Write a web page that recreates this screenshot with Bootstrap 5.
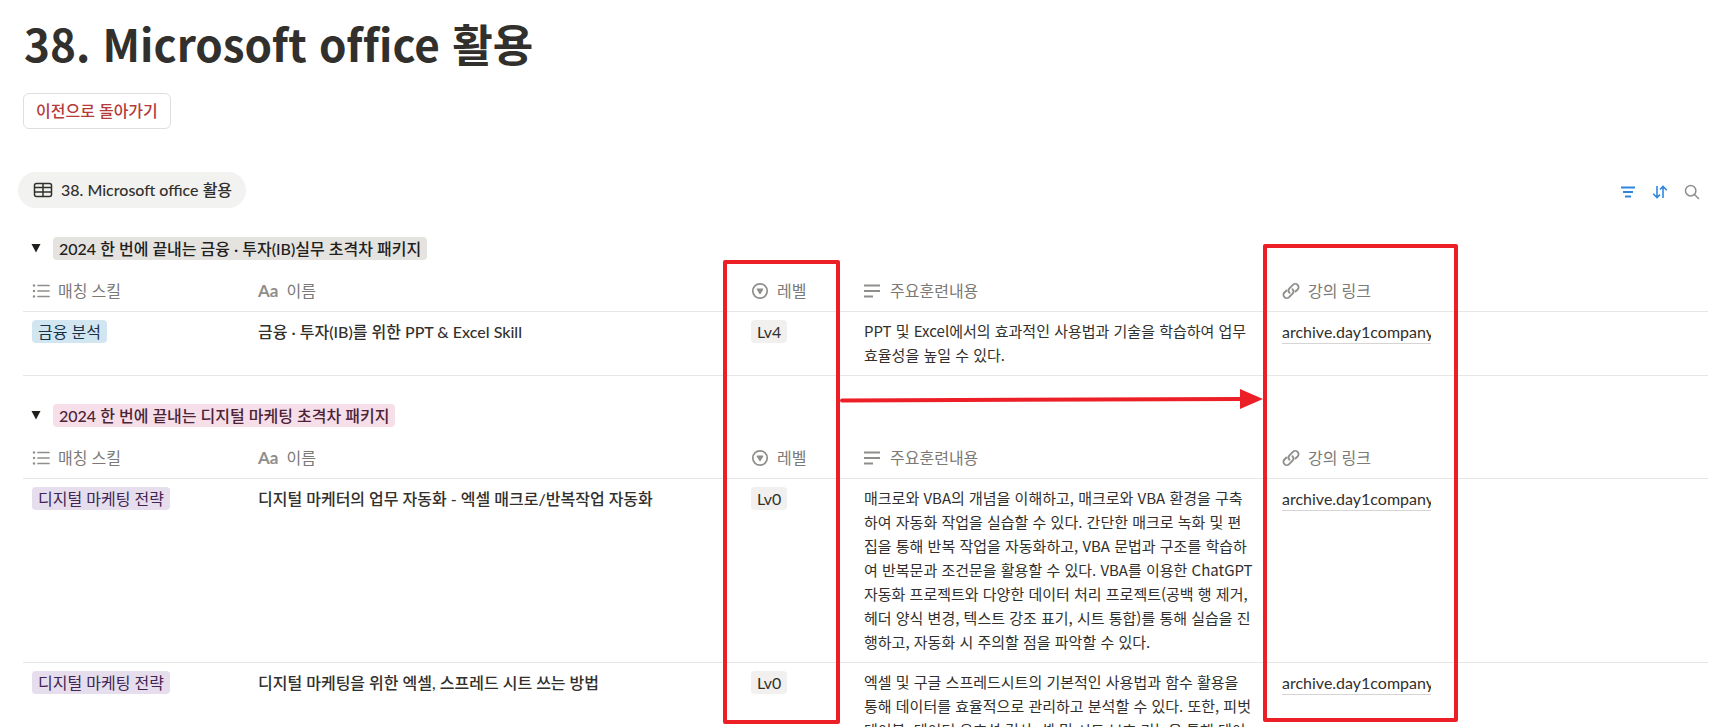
<!DOCTYPE html>
<html lang="ko">
<head>
<meta charset="utf-8">
<meta name="viewport" content="width=device-width, initial-scale=1">
<title>38. Microsoft office 활용</title>
<link href="https://cdn.jsdelivr.net/npm/bootstrap@5.3.0/dist/css/bootstrap.min.css" rel="stylesheet">
<style>
  body { font-family: Lato, "Noto Sans CJK KR", sans-serif; font-size: 16px; line-height: 24px; color: #32302c; background: #fff; font-variant-ligatures: none; }
  .page-title { font-family: "Noto Sans CJK KR", sans-serif; font-size: 44px; line-height: 52px; font-weight: 700; padding-top: 17px; }
  .back-btn { height: 36px; padding: 0 12px; border: 1px solid #dededd; border-radius: 6px; color: #b63a3a; font-weight: 500; line-height: 24px; background: #fff; }
  .view-tab { height: 36px; padding: 0 14px 0 15px; border: 0; border-radius: 18px; background: #f2f2f1; color: #32302c; font-weight: 500; }
  .toolbar { margin: 43px 7px 0 18px; }
  .tool-btn { width: 32px; height: 32px; border: 0; background: none; padding: 0; color: #2f87dd; }
  .tool-btn.find { color: #8f8e8b; }
  .page-block { margin: 0 7px 0 23px; }
  .board { margin-top: 18px; }
  .group-head { height: 44px; padding-left: 6px; }
  .next-group { margin-top: 17px; }
  .toggle-btn { width: 24px; height: 24px; border: 0; background: none; padding: 0; }
  .tag { display: inline-block; border-radius: 4px; padding: 0 6px; height: 23px; line-height: 23px; vertical-align: top; white-space: nowrap; }
  .tag-gray { background: #e4e3e0; color: #22201c; }
  .tag-pink { background: #f6dfe8; color: #4c2337; }
  .tag-blue { background: #d2e6f1; color: #183347; }
  .tag-purple { background: #e6deed; color: #412454; }
  .tag-lv { background: #f1f0ee; color: #32302c; }
  .grid-table { width: 100%; table-layout: fixed; border-collapse: separate; border-spacing: 0; }
  .grid-table th { height: 42px; padding: 0 9px; font-weight: 400; color: #7b7975; border-bottom: 1px solid #e6e6e4; vertical-align: middle; }
  .grid-table td { padding: 8px 9px 7px; border-bottom: 1px solid #e6e6e4; vertical-align: top; line-height: 24px; }
  .grid-table th svg { width: 18px; height: 18px; flex: none; color: #8f8e8b; }
  .grid-table td.desc-cell { padding: 7px 19px 8px 9px; font-family: "Noto Sans CJK KR", sans-serif; font-size: 15px; }
  .c-skill { width: 226px; } .c-name { width: 493px; } .c-level { width: 113px; } .c-desc { width: 418px; } .c-link { width: 167px; }
  .name-cell { font-weight: 500; }
  .aa { font-size: 17px; font-weight: 700; color: #8f8e8b; }
  .url { display: block; overflow: hidden; white-space: nowrap; height: 24px; }
  .url a { display: inline-block; line-height: 22px; color: #32302c; text-decoration: none; border-bottom: 1px solid #d6d5d3; }
  .note-box { position: absolute; border: 4px solid #ec1f27; border-radius: 2px; pointer-events: none; }
  .note-level { left: 700px; top: 34px; width: 117px; height: 464px; }
  .note-link { left: 1240px; top: 18px; width: 195px; height: 478px; }
  .note-arrow { position: absolute; left: 817px; top: 162px; width: 424px; height: 22px; pointer-events: none; }
</style>
</head>
<body>
<svg class="d-none" aria-hidden="true">
  <symbol id="i-list" viewBox="0 0 18 18"><path d="M6 3.500h11M6 9h11M6 14.500h11" stroke="currentColor" stroke-width="1.700" stroke-linecap="round"/><circle cx="2" cy="3.500" r="1.200" fill="currentColor"/><circle cx="2" cy="9" r="1.200" fill="currentColor"/><circle cx="2" cy="14.500" r="1.200" fill="currentColor"/></symbol>
  <symbol id="i-level" viewBox="0 0 18 18"><circle cx="9" cy="9" r="7.200" fill="none" stroke="currentColor" stroke-width="1.700"/><path d="M6.300 6.500h5.400a.6.6 0 0 1 .5.900L9.500 11.900a.6.6 0 0 1-1 0L5.800 7.400A.6.6 0 0 1 6.300 6.500z" fill="currentColor"/></symbol>
  <symbol id="i-text" viewBox="0 0 18 18"><path d="M0 3.500h16M0 9h16M0 14.500h9" stroke="currentColor" stroke-width="1.800"/></symbol>
  <symbol id="i-link" viewBox="0 0 18 18"><g fill="none" stroke="currentColor" stroke-width="1.800" stroke-linecap="round" stroke-linejoin="round"><path d="M7.600 10.900a3.300 3.300 0 0 1-.2-4.600L10.900 2.800a3.300 3.300 0 0 1 4.700 4.700L13.500 9.500"/><path d="M10.400 7.100a3.300 3.300 0 0 1 .2 4.600L7.100 15.200a3.300 3.300 0 0 1-4.700-4.700L4.500 8.500"/></g></symbol>
</svg>

<main class="vh-100 overflow-hidden">
  <h1 class="page-title m-0 px-4">38. Microsoft office 활용</h1>
  <div class="page-block pt-4"><button type="button" class="back-btn">이전으로 돌아가기</button></div>

  <div class="toolbar d-flex align-items-center justify-content-between">
    <button type="button" class="view-tab d-flex align-items-center gap-2">
      <svg width="20" height="18" viewBox="0 0 20 18" fill="none" stroke="currentColor" stroke-width="1.500"><rect x="1.500" y="2.500" width="17" height="13" rx="2"/><path d="M1.500 6.500h17M1.500 11h17M10 2.500v13"/></svg>
      <span>38. Microsoft office 활용</span>
    </button>
    <div class="d-flex">
      <button type="button" class="tool-btn" aria-label="필터"><svg width="16" height="16" viewBox="0 0 16 16"><path d="M1 3.500h14M3 8h10M5 12.500h6" stroke="currentColor" stroke-width="1.800"/></svg></button>
      <button type="button" class="tool-btn" aria-label="정렬"><svg width="16" height="16" viewBox="0 0 16 16" fill="none" stroke="currentColor" stroke-width="1.600"><path d="M5 2v11.500M1.200 9.800L5 13.600l3-3M11 14V2.500M8 5.500l3-3 3.800 3.800"/></svg></button>
      <button type="button" class="tool-btn find" aria-label="검색"><svg width="16" height="16" viewBox="0 0 16 16" fill="none" stroke="currentColor" stroke-width="1.500"><circle cx="6.700" cy="6.700" r="5.200"/><path d="M10.500 10.500l4.500 4.500"/></svg></button>
    </div>
  </div>

  <div class="page-block board position-relative">
    <section>
      <div class="group-head d-flex align-items-center">
        <button type="button" class="toggle-btn d-flex align-items-center" aria-label="접기"><svg width="14" height="12" viewBox="0 0 14 12"><path d="M2.500 2h9L7 10.500z" fill="#22201c"/></svg></button>
        <span class="tag tag-gray fw-medium">2024 한 번에 끝내는 금융 · 투자(IB)실무 초격차 패키지</span>
      </div>
      <table class="grid-table">
        <colgroup><col class="c-skill"><col class="c-name"><col class="c-level"><col class="c-desc"><col class="c-link"><col></colgroup>
        <thead><tr>
          <th><div class="d-flex align-items-center gap-2"><svg><use href="#i-list"/></svg>매칭 스킬</div></th>
          <th><div class="d-flex align-items-center gap-2"><span class="aa">Aa</span>이름</div></th>
          <th><div class="d-flex align-items-center gap-2"><svg><use href="#i-level"/></svg>레벨</div></th>
          <th><div class="d-flex align-items-center gap-2"><svg><use href="#i-text"/></svg>주요훈련내용</div></th>
          <th><div class="d-flex align-items-center gap-2"><svg><use href="#i-link"/></svg>강의 링크</div></th>
          <th></th>
        </tr></thead>
        <tbody><tr>
          <td><span class="tag tag-blue">금융 분석</span></td>
          <td class="name-cell">금융 · 투자(IB)를 위한 PPT &amp; Excel Skill</td>
          <td><span class="tag tag-lv">Lv4</span></td>
          <td class="desc-cell">PPT 및 Excel에서의 효과적인 사용법과 기술을 학습하여 업무 효율성을 높일 수 있다.</td>
          <td><span class="url"><a href="#">archive.day1company</a></span></td>
          <td></td>
        </tr></tbody>
      </table>
    </section>

    <section class="next-group">
      <div class="group-head d-flex align-items-center">
        <button type="button" class="toggle-btn d-flex align-items-center" aria-label="접기"><svg width="14" height="12" viewBox="0 0 14 12"><path d="M2.500 2h9L7 10.500z" fill="#22201c"/></svg></button>
        <span class="tag tag-pink fw-medium">2024 한 번에 끝내는 디지털 마케팅 초격차 패키지</span>
      </div>
      <table class="grid-table">
        <colgroup><col class="c-skill"><col class="c-name"><col class="c-level"><col class="c-desc"><col class="c-link"><col></colgroup>
        <thead><tr>
          <th><div class="d-flex align-items-center gap-2"><svg><use href="#i-list"/></svg>매칭 스킬</div></th>
          <th><div class="d-flex align-items-center gap-2"><span class="aa">Aa</span>이름</div></th>
          <th><div class="d-flex align-items-center gap-2"><svg><use href="#i-level"/></svg>레벨</div></th>
          <th><div class="d-flex align-items-center gap-2"><svg><use href="#i-text"/></svg>주요훈련내용</div></th>
          <th><div class="d-flex align-items-center gap-2"><svg><use href="#i-link"/></svg>강의 링크</div></th>
          <th></th>
        </tr></thead>
        <tbody>
        <tr>
          <td><span class="tag tag-purple">디지털 마케팅 전략</span></td>
          <td class="name-cell">디지털 마케터의 업무 자동화 - 엑셀 매크로/반복작업 자동화</td>
          <td><span class="tag tag-lv">Lv0</span></td>
          <td class="desc-cell">매크로와 VBA의 개념을 이해하고, 매크로와 VBA 환경을 구축하여 자동화 작업을 실습할 수 있다. 간단한 매크로 녹화 및 편집을 통해 반복 작업을 자동화하고, VBA 문법과 구조를 학습하여 반복문과 조건문을 활용할 수 있다. VBA를 이용한 ChatGPT 자동화 프로젝트와 다양한 데이터 처리 프로젝트(공백 행 제거, 헤더 양식 변경, 텍스트 강조 표기, 시트 통합)를 통해 실습을 진행하고, 자동화 시 주의할 점을 파악할 수 있다.</td>
          <td><span class="url"><a href="#">archive.day1company</a></span></td>
          <td></td>
        </tr>
        <tr>
          <td><span class="tag tag-purple">디지털 마케팅 전략</span></td>
          <td class="name-cell">디지털 마케팅을 위한 엑셀, 스프레드 시트 쓰는 방법</td>
          <td><span class="tag tag-lv">Lv0</span></td>
          <td class="desc-cell">엑셀 및 구글 스프레드시트의 기본적인 사용법과 함수 활용을 통해 데이터를 효율적으로 관리하고 분석할 수 있다. 또한, 피벗 테이블, 데이터 유효성 검사, 셀 및 시트 보호 기능을 통해 데이</td>
          <td><span class="url"><a href="#">archive.day1company</a></span></td>
          <td></td>
        </tr>
        </tbody>
      </table>
    </section>

    <div class="note-box note-level"></div>
    <div class="note-box note-link"></div>
    <svg class="note-arrow" viewBox="0 0 424 22"><path d="M2 12.500L402 11" stroke="#ec1f27" stroke-width="4" stroke-linecap="round"/><path d="M400 1l23 10-23 10z" fill="#ec1f27"/></svg>
  </div>
</main>
<script src="https://cdn.jsdelivr.net/npm/bootstrap@5.3.0/dist/js/bootstrap.bundle.min.js"></script>
</body>
</html>
